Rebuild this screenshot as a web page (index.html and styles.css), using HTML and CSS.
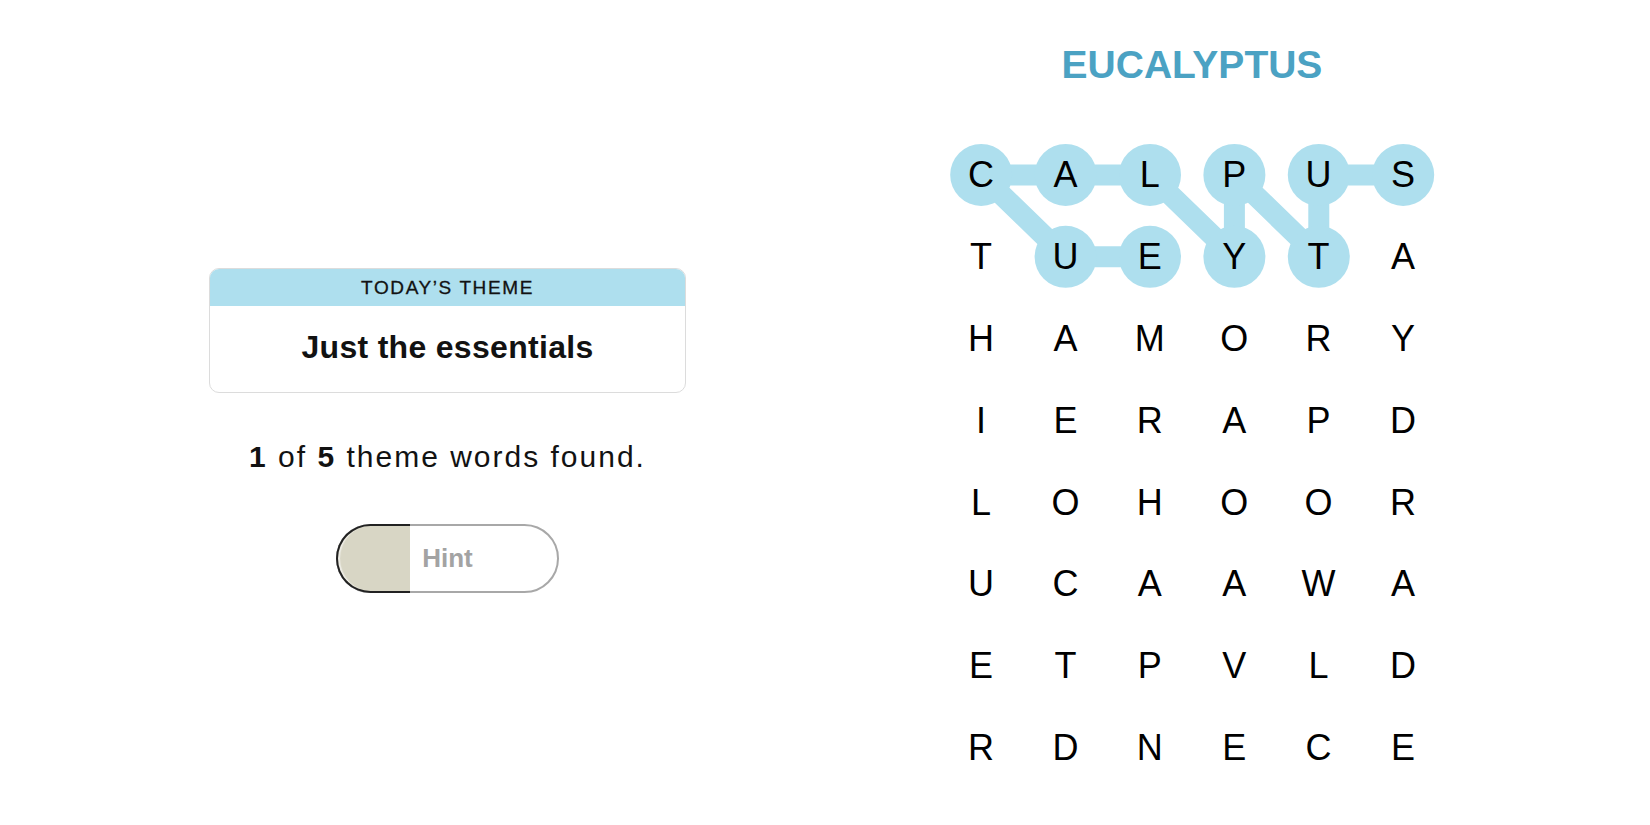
FILE: index.html
```html
<!DOCTYPE html>
<html lang="en">
<head>
<meta charset="utf-8">
<title>Strands</title>
<link rel="stylesheet" href="styles.css">
</head>
<body>
<main class="page">
  <section class="info">
    <div class="theme-card">
      <div class="theme-head">TODAY’S THEME</div>
      <div class="theme-body">Just the essentials</div>
    </div>
    <p class="progress"><b>1</b> of <b>5</b> theme words found.</p>
    <button class="hint" type="button">
      <span class="hint-track"></span>
      <span class="hint-fill"></span>
      <span class="hint-label">Hint</span>
    </button>
  </section>
  <section class="board">
    <h1 class="found-word">EUCALYPTUS</h1>
    <div class="grid">
      <svg class="paths" width="506.4" height="655.2" viewBox="0 0 506.4 655.2" aria-hidden="true">
        <polyline points="211,122.85 126.6,122.85 42.2,40.95 126.6,40.95 211,40.95 295.4,122.85 295.4,40.95 379.8,122.85 379.8,40.95 464.2,40.95" fill="none" stroke="#aedfee" stroke-width="21" stroke-linejoin="round" stroke-linecap="round"/>
        <g fill="#aedfee">
          <circle cx="42.2" cy="40.95" r="31"/>
          <circle cx="126.6" cy="40.95" r="31"/>
          <circle cx="211" cy="40.95" r="31"/>
          <circle cx="295.4" cy="40.95" r="31"/>
          <circle cx="379.8" cy="40.95" r="31"/>
          <circle cx="464.2" cy="40.95" r="31"/>
          <circle cx="126.6" cy="122.85" r="31"/>
          <circle cx="211" cy="122.85" r="31"/>
          <circle cx="295.4" cy="122.85" r="31"/>
          <circle cx="379.8" cy="122.85" r="31"/>
        </g>
      </svg>
      <span>C</span><span>A</span><span>L</span><span>P</span><span>U</span><span>S</span>
      <span>T</span><span>U</span><span>E</span><span>Y</span><span>T</span><span>A</span>
      <span>H</span><span>A</span><span>M</span><span>O</span><span>R</span><span>Y</span>
      <span>I</span><span>E</span><span>R</span><span>A</span><span>P</span><span>D</span>
      <span>L</span><span>O</span><span>H</span><span>O</span><span>O</span><span>R</span>
      <span>U</span><span>C</span><span>A</span><span>A</span><span>W</span><span>A</span>
      <span>E</span><span>T</span><span>P</span><span>V</span><span>L</span><span>D</span>
      <span>R</span><span>D</span><span>N</span><span>E</span><span>C</span><span>E</span>
    </div>
  </section>
</main>
</body>
</html>
```

FILE: styles.css
```css
html, body {
  margin: 0;
  padding: 0;
  background: #ffffff;
}

body {
  font-family: "Liberation Sans", Arial, sans-serif;
  color: #121212;
}

.page {
  display: flex;
  width: 1650px;
  height: 825px;
}

.info {
  flex: 0 0 895px;
  display: flex;
  flex-direction: column;
  align-items: center;
  padding-top: 268px;
  box-sizing: border-box;
}

.theme-card {
  width: 477px;
  border: 1px solid #dcdcdc;
  border-radius: 10px;
  overflow: hidden;
  box-sizing: border-box;
}

.theme-head {
  height: 37px;
  background: #aedfee;
  display: flex;
  align-items: center;
  justify-content: center;
  font-size: 19px;
  letter-spacing: 1.6px;
  color: #121212;
  -webkit-text-stroke: 0.3px #121212;
}

.theme-body {
  height: 86px;
  display: flex;
  align-items: center;
  justify-content: center;
  font-size: 32px;
  font-weight: 700;
  letter-spacing: 0.3px;
  padding-bottom: 4px;
  box-sizing: border-box;
}

.progress {
  margin: 46px 0 0;
  font-size: 30px;
  line-height: 36px;
  letter-spacing: 2px;
  color: #121212;
}

.progress b {
  font-weight: 700;
}

.hint {
  position: relative;
  margin-top: 49px;
  width: 223px;
  height: 69px;
  padding: 0;
  border: 0;
  background: #ffffff;
  border-radius: 35px;
  font-family: "Liberation Sans", Arial, sans-serif;
  cursor: pointer;
}

.hint-track {
  position: absolute;
  inset: 0;
  border: 2px solid #a8a8a8;
  border-radius: 35px;
}

.hint-fill {
  position: absolute;
  left: 0;
  top: 0;
  bottom: 0;
  width: 74px;
  box-sizing: border-box;
  background: #d8d6c5;
  border: 2px solid #222222;
  border-right: 0;
  border-radius: 35px 0 0 35px;
  box-shadow: inset 3px 0 1px -1px #eeede6;
}

.hint-label {
  position: relative;
  display: flex;
  align-items: center;
  justify-content: center;
  height: 100%;
  font-size: 26px;
  font-weight: 700;
  color: #a3a3a3;
}

.board {
  flex: 0 0 594px;
  display: flex;
  flex-direction: column;
  align-items: center;
  padding-top: 45px;
  box-sizing: border-box;
}

.found-word {
  margin: 0;
  font-size: 39px;
  line-height: 39px;
  font-weight: 700;
  color: #4ba2c3;
}

.grid {
  position: relative;
  margin-top: 50px;
  display: grid;
  grid-template-columns: repeat(6, 84.4px);
  grid-template-rows: repeat(8, 81.9px);
}

.paths {
  position: absolute;
  left: 0;
  top: 0;
}

.grid span {
  position: relative;
  display: flex;
  align-items: center;
  justify-content: center;
  font-size: 36px;
  color: #000000;
}
```
